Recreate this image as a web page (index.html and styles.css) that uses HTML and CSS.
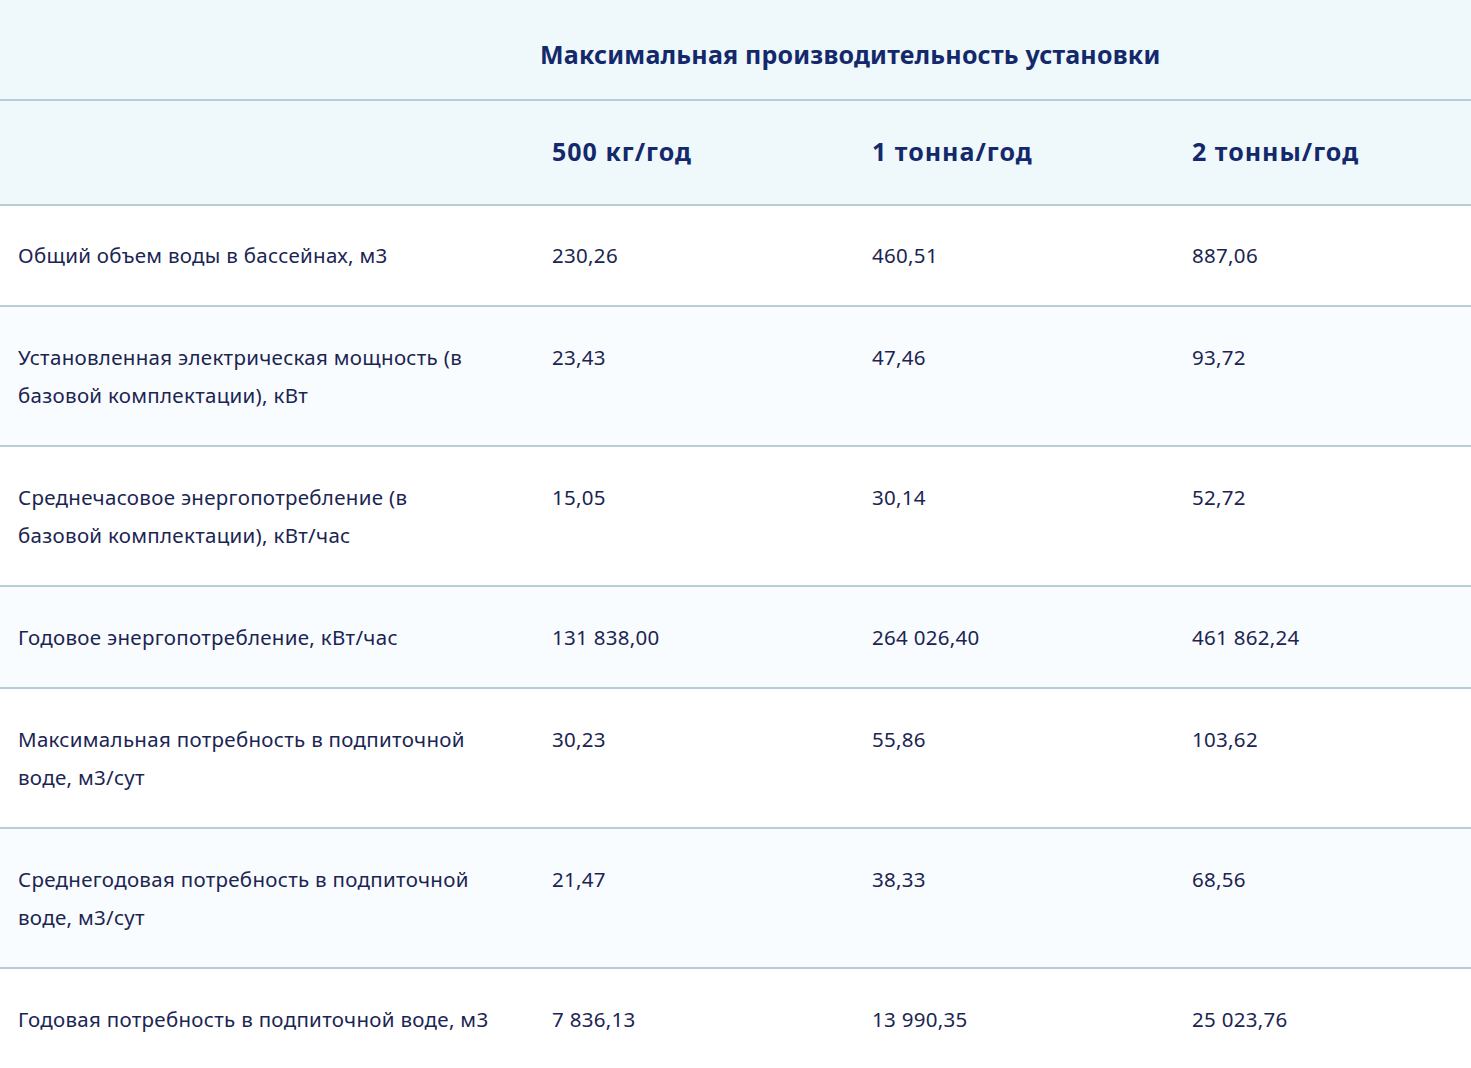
FILE: index.html
```html
<!DOCTYPE html>
<html lang="ru">
<head>
<meta charset="utf-8">
<link rel="stylesheet" href="styles.css">
</head>
<body>
<div class="table">
  <div class="row head title-row">
    <div class="cell"></div>
    <div class="cell title">Максимальная производительность установки</div>
  </div>
  <div class="row head cap-row">
    <div class="cell"></div>
    <div class="cell">500 кг/год</div>
    <div class="cell">1 тонна/год</div>
    <div class="cell">2 тонны/год</div>
  </div>
  <div class="row first">
    <div class="cell">Общий объем воды в бассейнах, м3</div>
    <div class="cell">230,26</div>
    <div class="cell">460,51</div>
    <div class="cell">887,06</div>
  </div>
  <div class="row alt">
    <div class="cell">Установленная электрическая мощность (в базовой комплектации), кВт</div>
    <div class="cell">23,43</div>
    <div class="cell">47,46</div>
    <div class="cell">93,72</div>
  </div>
  <div class="row">
    <div class="cell">Среднечасовое энергопотребление (в базовой комплектации), кВт/час</div>
    <div class="cell">15,05</div>
    <div class="cell">30,14</div>
    <div class="cell">52,72</div>
  </div>
  <div class="row alt">
    <div class="cell">Годовое энергопотребление, кВт/час</div>
    <div class="cell">131 838,00</div>
    <div class="cell">264 026,40</div>
    <div class="cell">461 862,24</div>
  </div>
  <div class="row">
    <div class="cell">Максимальная потребность в подпиточной воде, м3/сут</div>
    <div class="cell">30,23</div>
    <div class="cell">55,86</div>
    <div class="cell">103,62</div>
  </div>
  <div class="row alt">
    <div class="cell">Среднегодовая потребность в подпиточной воде, м3/сут</div>
    <div class="cell">21,47</div>
    <div class="cell">38,33</div>
    <div class="cell">68,56</div>
  </div>
  <div class="row last">
    <div class="cell nowrap">Годовая потребность в подпиточной воде, м3</div>
    <div class="cell">7 836,13</div>
    <div class="cell">13 990,35</div>
    <div class="cell">25 023,76</div>
  </div>
</div>
</body>
</html>
```
FILE: styles.css
```css
html, body {
  margin: 0;
  padding: 0;
  background: #ffffff;
}
body {
  font-family: "Noto Sans", Lato, sans-serif;
  color: #1b2552;
}
.table {
  width: 1471px;
}
.row {
  display: grid;
  grid-template-columns: 534px 320px 320px 1fr;
  border-bottom: 2px solid #b8cdd7;
  background: #ffffff;
}
.row.alt {
  background: #f9fcfe;
}
.row.first .cell {
  padding-top: 30px;
}
.row.last {
  border-bottom: none;
  min-height: 100px;
}
.cell {
  padding: 31px 18px 31px 18px;
  font-size: 20.5px;
  line-height: 38px;
  letter-spacing: 0.3px;
}
.cell.nowrap {
  white-space: nowrap;
}
.row .cell:first-child {
  padding-right: 56px;
}
.head {
  background: #eff8fb;
  color: #13296b;
  font-weight: 700;
}
.title-row {
  grid-template-columns: 534px 1fr;
  height: 101px;
  box-sizing: border-box;
}
.title-row .cell {
  padding: 0 6px;
  display: flex;
  align-items: center;
  font-size: 25px;
  letter-spacing: 0.2px;
}
.title-row .title {
  padding-top: 8px;
}
.cap-row {
  height: 105px;
  box-sizing: border-box;
}
.cap-row .cell {
  display: flex;
  align-items: center;
  font-size: 25px;
  letter-spacing: 1px;
  padding-top: 0;
  padding-bottom: 4px;
}
```
